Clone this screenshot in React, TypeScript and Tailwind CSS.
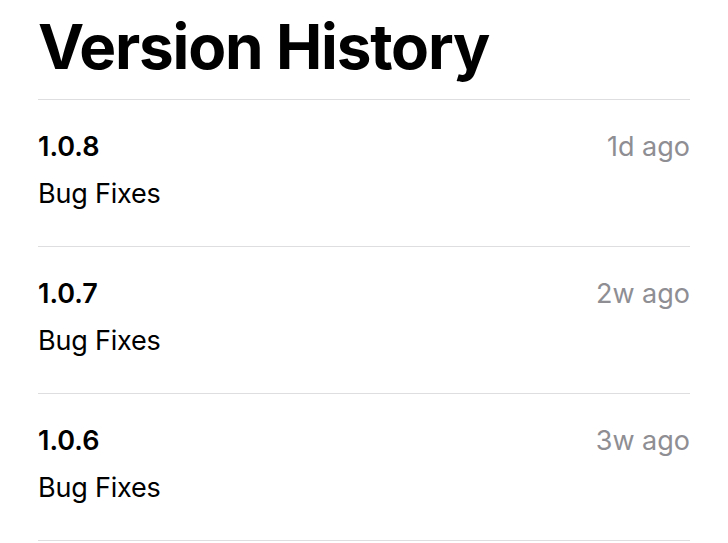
import React from "react";

type Version = {
  number: string;
  when: string;
  notes: string;
};

const versions: Version[] = [
  { number: "1.0.8", when: "1d ago", notes: "Bug Fixes" },
  { number: "1.0.7", when: "2w ago", notes: "Bug Fixes" },
  { number: "1.0.6", when: "3w ago", notes: "Bug Fixes" },
];

const App = () => {
  return (
    <div
      className="min-h-screen bg-white px-[38px] text-black"
      style={{ fontFamily: "Inter, 'Noto Sans', sans-serif" }}
    >
      <h1 className="pt-4 pb-[21px] text-[62px] leading-[62px] font-bold tracking-[-1.2px]">
        Version History
      </h1>
      {versions.map((v) => (
        <div key={v.number} className="border-t border-[#dedee0] pt-[30px] pb-[35px]">
          <div className="flex items-start justify-between text-[27px] leading-[34px]">
            <span className="font-semibold">{v.number}</span>
            <span className="text-[#8e8e93]">{v.when}</span>
          </div>
          <p className="mt-[13px] text-[27px] leading-[34px] tracking-[-0.2px]">{v.notes}</p>
        </div>
      ))}
      <div className="border-t border-[#dedee0]" />
    </div>
  );
};

export default App;
